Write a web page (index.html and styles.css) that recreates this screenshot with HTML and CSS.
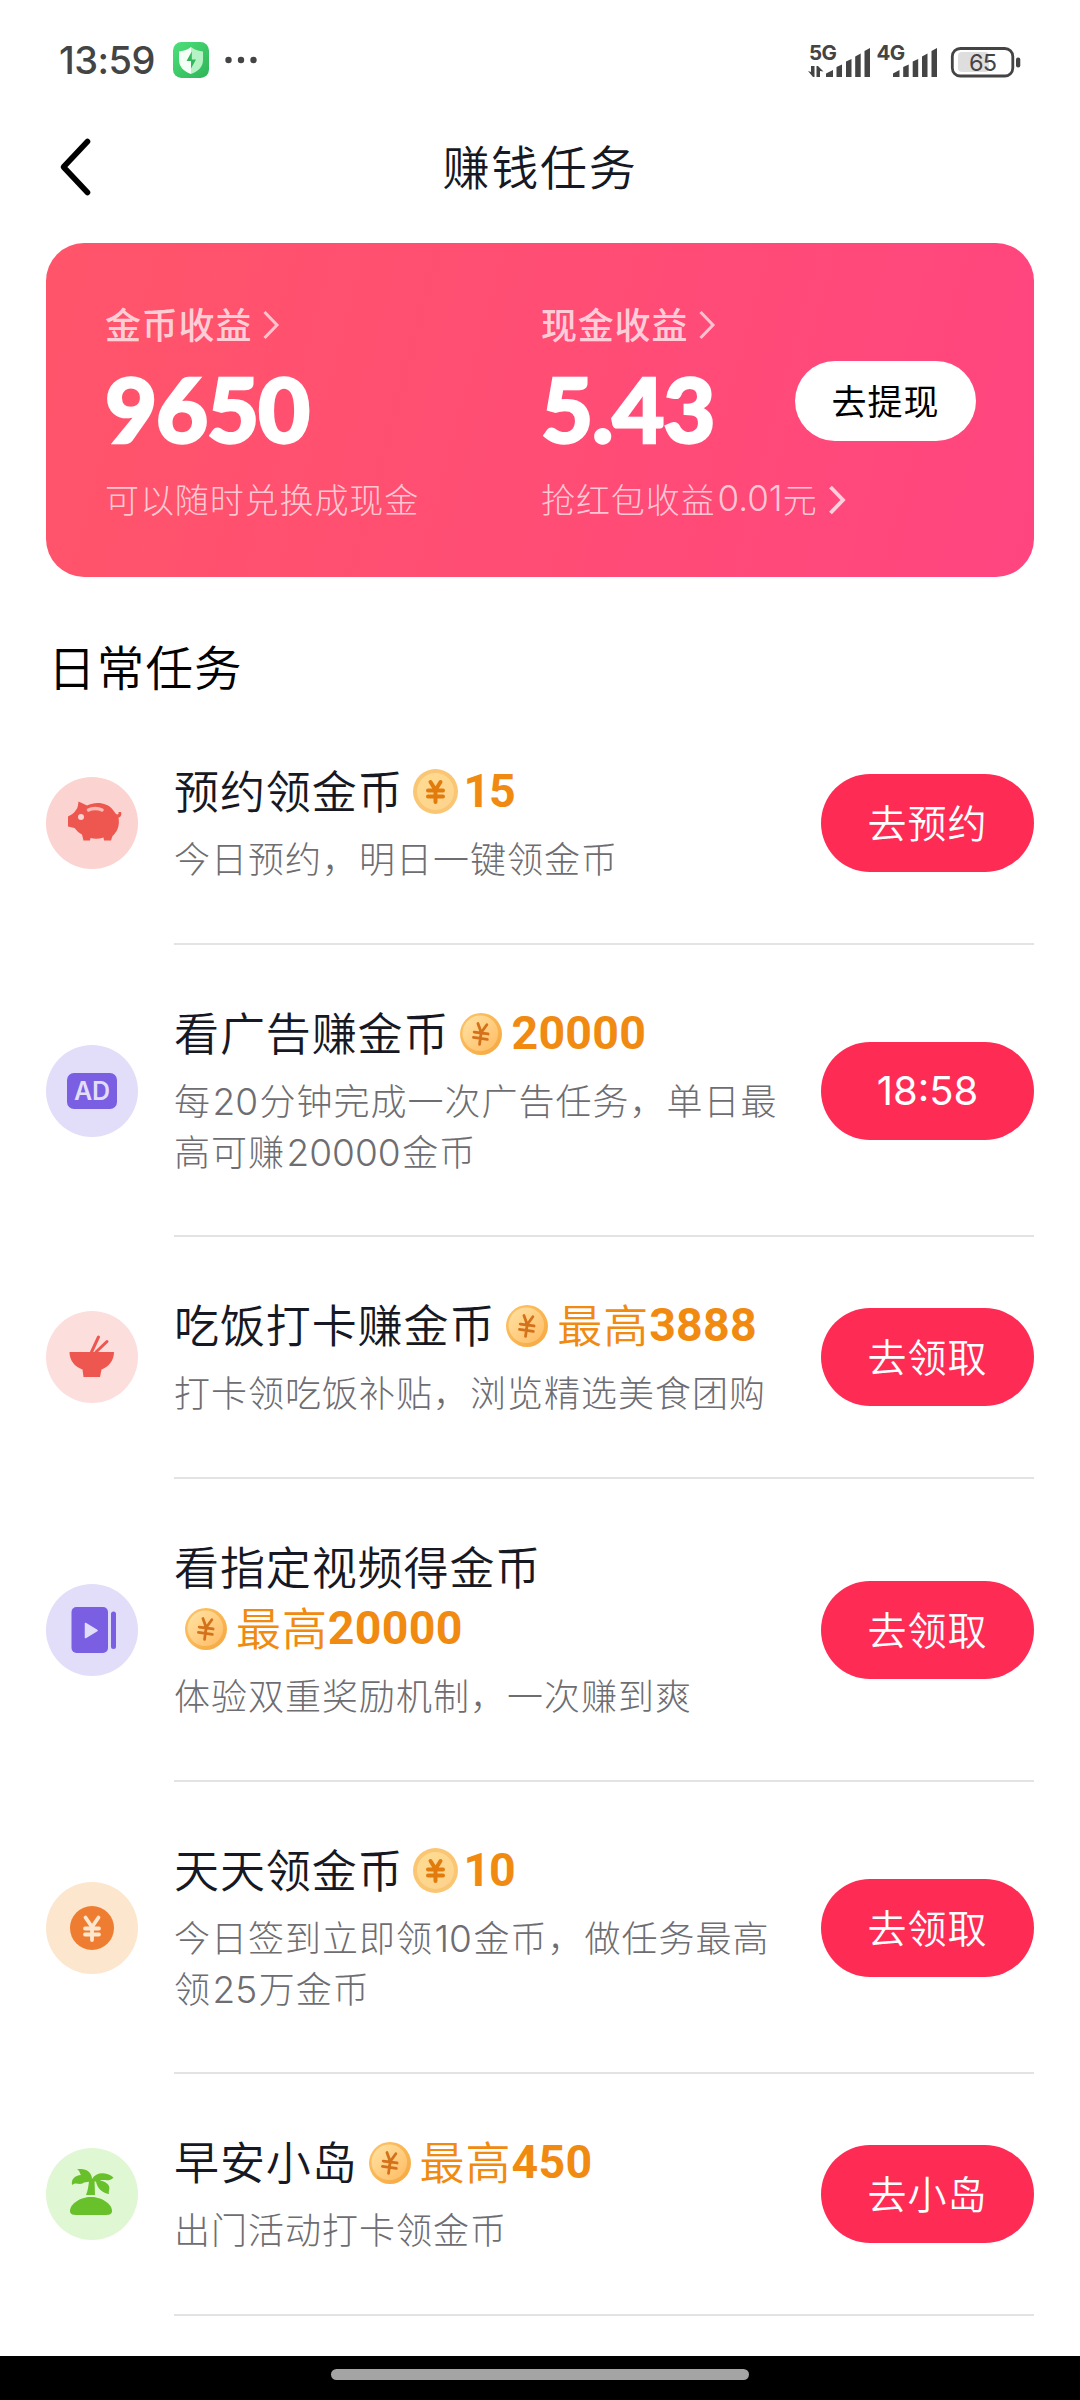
FILE: index.html
```html
<!DOCTYPE html>
<html lang="zh-CN">
<head>
<meta charset="utf-8">
<title>赚钱任务</title>
<link rel="stylesheet" href="styles.css">
</head>
<body>
<svg class="defs" width="0" height="0" aria-hidden="true">
  <defs>
    <linearGradient id="coinRim" x1="0" y1="0" x2="1" y2="1">
      <stop offset="0" stop-color="#fdc468"/><stop offset="1" stop-color="#f6a840"/>
    </linearGradient>
    <linearGradient id="coinFace" x1="0" y1="0" x2="1" y2="1">
      <stop offset="0" stop-color="#ffe3a4"/><stop offset="1" stop-color="#ffbb62"/>
    </linearGradient>
    <linearGradient id="coinSoft" x1="0" y1="0" x2="1" y2="1">
      <stop offset="0" stop-color="#ffdc92"/><stop offset="1" stop-color="#fdd28c"/>
    </linearGradient>
    <linearGradient id="guard" x1="0" y1="0" x2="1" y2="1">
      <stop offset="0" stop-color="#4de07c"/><stop offset="1" stop-color="#2fb457"/>
    </linearGradient>
    <symbol id="coin" viewBox="0 0 42 42">
      <circle cx="21" cy="21" r="21" fill="url(#coinRim)"/>
      <circle cx="20.3" cy="20.3" r="17.8" fill="url(#coinFace)"/>
      <path d="M16.500 11 L21 19.500 L25.500 11 M21 19.500 V31.500 M14 20 H28 M14 25.500 H28" transform="rotate(8 21 21)" class="coin-yen"/>
    </symbol>
    <symbol id="coin-big" viewBox="0 0 45 45">
      <circle cx="22.5" cy="22.5" r="22.5" fill="#fbc673"/>
      <circle cx="22.5" cy="22.5" r="18.500" fill="url(#coinSoft)"/>
      <path d="M17.500 13 L22.500 21 L27.500 13 M22.500 21 V33 M15 21.500 H30 M15 27.500 H30" class="coin-yen coin-yen-bold"/>
    </symbol>
  </defs>
</svg>
<div class="screen">
  <header class="status">
    <span class="clock">13:59</span>
    <svg class="guard" viewBox="0 0 36 36">
      <rect width="36" height="36" rx="8.5" fill="url(#guard)"/>
      <path d="M18 5 C14 8 10 9 6 9.5 V18 C6 25 11 29.500 18 32Z" fill="#f4fff6"/>
      <path d="M18 5 C22 8 26 9 30 9.500 V18 C30 25 25 29.500 18 32Z" fill="#b5f3c4"/>
      <path d="M18.800 9.500 L13.500 19 H18 L18 26.500 L23 17.500 H18.800Z" fill="#32b85a"/>
    </svg>
    <svg class="dots" viewBox="0 0 32 8">
      <circle cx="3.500" cy="4" r="3.200"/><circle cx="16" cy="4" r="3.200"/><circle cx="28.500" cy="4" r="3.200"/>
    </svg>
    <svg class="signals" viewBox="0 0 214 36">
      <text x="1" y="17.500" class="net">5G</text>
      <path d="M0 29 L3 30 V24 H6.500 V35 H5Z M8.500 24 H10 L15.500 29.500 L12 29 V35 H8.500Z"/>
      <path d="M18 35 V31.500 L25 28 V35Z M28.500 35 V25 L34 22.500 V35Z M38 35 V19.500 L43.500 17 V35Z M47.200 35 V14.500 L52.700 11.500 V35Z M56.500 35 V9 L62 6 V35Z"/>
      <text x="68.500" y="17.500" class="net">4G</text>
      <path d="M85 35 V31.500 L91.500 28 V35Z M95.200 35 V25 L100.700 22.500 V35Z M104.700 35 V19.500 L110.200 17 V35Z M114 35 V14.500 L119.500 11.500 V35Z M123.500 35 V9 L129 6 V35Z"/>
      <rect x="150" y="10" width="31" height="20" rx="4" fill="#dedede"/>
      <rect x="144.300" y="6.500" width="60.500" height="27.500" rx="8" class="shell"/>
      <rect x="208" y="15.500" width="4.300" height="10" rx="2"/>
      <text x="174.500" y="29" class="level">65</text>
    </svg>
  </header>

  <nav class="nav">
    <svg class="back" viewBox="0 0 32 58"><path d="M27.500 3.500 L3.500 29 L27.500 54.500"/></svg>
    <h1 class="nav-title">赚钱任务</h1>
  </nav>

  <section class="card">
    <div class="earn earn-coins">
      <div class="earn-label">金币收益<svg class="chev" viewBox="0 0 18 30"><path d="M2.500 2 L15 15 L2.500 28"/></svg></div>
      <div class="earn-value">9650</div>
      <div class="earn-note">可以随时兑换成现金</div>
    </div>
    <div class="earn">
      <div class="earn-label">现金收益<svg class="chev" viewBox="0 0 18 30"><path d="M2.500 2 L15 15 L2.500 28"/></svg></div>
      <div class="earn-value">5.43</div>
      <div class="earn-note">抢红包收益<span class="amount">0.01</span>元<svg class="chev chev-bold" viewBox="0 0 18 30"><path d="M2.500 2 L15 15 L2.500 28"/></svg></div>
    </div>
    <button class="withdraw">去提现</button>
  </section>

  <h2 class="section-title">日常任务</h2>

  <main class="tasks">
    <article class="task">
      <svg class="badge" viewBox="0 0 92 92">
        <circle cx="46" cy="46" r="46" fill="#fbd3d0"/>
        <path d="M32.500 24.500 L41 28.500 C49 24.500 61 25 67 33 L70 37 C72 38 73 37 72.500 35 L75 35 C76 38 74.500 40.500 72.500 40.500 C74 49 71 55 66.500 59 L65 63.500 H58 L57.500 60.500 C53 62 48 62 44.500 61 L44 63.500 H37.500 L36 57.500 C33 56 30.500 53.500 28.500 51 L22 49.500 V39.500 C25 38 28 36.500 30 33 C32 31 32 28 32.500 24.500Z" fill="#ee574f"/>
        <circle cx="35" cy="40" r="3" fill="#fbd3d0"/>
        <path d="M42.500 33 C46 31 52 31 56 33" fill="none" stroke="#fbb9b4" stroke-width="3.500" stroke-linecap="round"/>
      </svg>
      <div class="info">
        <h3 class="name">预约领金币<span class="reward reward-big"><svg class="coin"><use href="#coin-big"/></svg><b>15</b></span></h3>
        <p class="desc">今日预约，明日一键领金币</p>
      </div>
      <button class="go">去预约</button>
    </article>

    <article class="task task-tall">
      <svg class="badge" viewBox="0 0 92 92">
        <circle cx="46" cy="46" r="46" fill="#e2ddf9"/>
        <rect x="21" y="28" width="50" height="36" rx="7" fill="#7a5fe3"/>
        <text x="46" y="55" class="ad">AD</text>
      </svg>
      <div class="info">
        <h3 class="name">看广告赚金币<span class="reward"><svg class="coin"><use href="#coin"/></svg><b>20000</b></span></h3>
        <p class="desc">每<span class="num">20</span>分钟完成一次广告任务，单日最高可赚<span class="num">20000</span>金币</p>
      </div>
      <button class="go go-time">18:58</button>
    </article>

    <article class="task">
      <svg class="badge" viewBox="0 0 92 92">
        <circle cx="46" cy="46" r="46" fill="#fcdedd"/>
        <path d="M23.500 41 H68 C68 49 63 56 55.500 58.500 L54 66 H37.500 L36.500 58.500 C28.500 56 23.500 49 23.500 41Z" fill="#ee574f"/>
        <path d="M45.500 41 L52.500 26 M50 41 L61 30.500" stroke="#ee574f" stroke-width="3" stroke-linecap="round"/>
      </svg>
      <div class="info">
        <h3 class="name">吃饭打卡赚金币<span class="reward"><svg class="coin"><use href="#coin"/></svg>最高<b>3888</b></span></h3>
        <p class="desc">打卡领吃饭补贴，浏览精选美食团购</p>
      </div>
      <button class="go">去领取</button>
    </article>

    <article class="task">
      <svg class="badge" viewBox="0 0 92 92">
        <circle cx="46" cy="46" r="46" fill="#e2ddf9"/>
        <rect x="25.500" y="23" width="36.500" height="46" rx="5" fill="#7a5fe3"/>
        <rect x="65" y="27.500" width="5" height="37.500" rx="2.500" fill="#7a5fe3"/>
        <path d="M39.500 39.500 L51 46.500 L39.500 53.500Z" fill="#e2ddf9" stroke="#e2ddf9" stroke-width="1.500" stroke-linejoin="round"/>
      </svg>
      <div class="info">
        <h3 class="name">看指定视频得金币<span class="reward"><svg class="coin"><use href="#coin"/></svg>最高<b>20000</b></span></h3>
        <p class="desc">体验双重奖励机制，一次赚到爽</p>
      </div>
      <button class="go">去领取</button>
    </article>

    <article class="task task-tall">
      <svg class="badge" viewBox="0 0 92 92">
        <circle cx="46" cy="46" r="46" fill="#fce6cd"/>
        <circle cx="46" cy="46" r="22" fill="#ee7d31"/>
        <path d="M39.500 35.500 L46 45 L52.500 35.500 M46 45 V58 M39 46.500 H53 M39 52.500 H53" class="yen"/>
      </svg>
      <div class="info">
        <h3 class="name">天天领金币<span class="reward reward-big"><svg class="coin"><use href="#coin-big"/></svg><b>10</b></span></h3>
        <p class="desc">今日签到立即领<span class="num">10</span>金币，做任务最高领<span class="num">25</span>万金币</p>
      </div>
      <button class="go">去领取</button>
    </article>

    <article class="task">
      <svg class="badge" viewBox="0 0 92 92">
        <circle cx="46" cy="46" r="46" fill="#e0f7d3"/>
        <g fill="#68c02a">
          <path d="M45 49 C56 49 66 56 66 63 C66 66.500 63 67 59 67 H31 C27 67 24 66.500 24 63 C24 56 34 49 45 49Z"/>
          <path d="M43 33 L48.500 32 L49 47 H40 C42 42 42.500 38 43 33Z"/>
          <path d="M46 31 C46 24 39 19.500 31 21.500 C34 22.500 33.500 25 35 27 C29 27.500 25 31 26 37 C31 33.500 33 38 38 34.500 L44.500 33.500 L50 33.500 C51 40 56 45 63 46 C62 43 65 40 62 36.500 C60 34 57 33 54 32.500 C58 31 63 34.500 67.500 29.500 C60 23.500 50 24 46 31Z"/>
        </g>
      </svg>
      <div class="info">
        <h3 class="name">早安小岛<span class="reward"><svg class="coin"><use href="#coin"/></svg>最高<b>450</b></span></h3>
        <p class="desc">出门活动打卡领金币</p>
      </div>
      <button class="go">去小岛</button>
    </article>
  </main>

  <footer class="gesture"><div class="gesture-bar"></div></footer>
</div>
</body>
</html>
```
FILE: styles.css
```css
* { box-sizing: border-box; margin: 0; padding: 0; }
html, body { width: 1080px; height: 2400px; overflow: hidden; background: #fff; }
body { font-family: "Noto Sans CJK SC", sans-serif; }
button { border: 0; font-family: inherit; }
svg { display: block; flex: none; overflow: visible; }
.defs { position: absolute; }

.screen { display: flex; flex-direction: column; width: 1080px; height: 2400px; }

.status { display: flex; align-items: center; height: 120px; padding: 0 58px 0 59px; }
.clock { width: 114px; font: 500 38px/1 Inter, sans-serif; letter-spacing: -0.5px; color: #444; }
.guard { width: 36px; height: 36px; }
.dots { width: 32px; height: 8px; margin-left: 16px; fill: #444; }
.signals { width: 214px; height: 36px; margin: -1px 0 0 auto; fill: #444; }
.net { font: 700 20.500px Inter, sans-serif; letter-spacing: -0.5px; }
.shell { fill: none; stroke: #444; stroke-width: 2.800px; }
.level { font: 400 23.500px Inter, sans-serif; letter-spacing: -1px; text-anchor: middle; }

.nav { display: grid; grid-template-columns: 58px 1fr 58px; align-items: center; height: 94px; padding: 0 58px; }
.back { width: 32px; height: 58px; margin-left: 2px; }
.back path { fill: none; stroke: #000; stroke-width: 5.600px; stroke-linecap: round; stroke-linejoin: round; }
.nav-title { padding-bottom: 5px; text-align: center; font-size: 47px; line-height: 70px; font-weight: 350; letter-spacing: 1.800px; color: #161823; }

.card { display: flex; align-items: flex-start; height: 334px; margin: 29px 46px 0; padding: 54px 58px 0 59px; border-radius: 38px; background: linear-gradient(105deg, #ff556a 0%, #ff4e73 45%, #ff4580 100%); color: #fff; }
.earn { width: 254px; white-space: nowrap; }
.earn-coins { width: 436px; }
.earn-label { display: flex; align-items: center; height: 52px; font-size: 36px; font-weight: 500; letter-spacing: 0.800px; color: rgba(255,255,255,.74); }
.chev { width: 18px; height: 30px; margin: 3px 0 0 10px; }
.chev path { fill: none; stroke: rgba(255,255,255,.66); stroke-width: 3px; }
.chev-bold path { stroke: rgba(255,255,255,.74); stroke-width: 3.800px; }
.earn-value { height: 124px; font: 900 90px/119px Lato, sans-serif; letter-spacing: -1.200px; -webkit-text-stroke: 2.400px #fff; }
.earn-note { display: flex; align-items: center; height: 50px; font-size: 34px; font-weight: 300; letter-spacing: 0.900px; color: rgba(255,255,255,.7); }
.amount { margin-left: 2px; font-family: Inter, sans-serif; font-size: 35px; font-weight: 300; letter-spacing: 0; }
.withdraw { width: 181px; height: 80px; margin: 64px 0 0 auto; padding-bottom: 4px; border-radius: 40px; background: #fff; font-size: 35px; font-weight: 400; letter-spacing: 1px; color: #000; }

.section-title { height: 127px; padding: 54px 0 0 48px; font-size: 47.500px; line-height: 70px; font-weight: 350; letter-spacing: 1.200px; color: #000; }

.tasks { flex: 1; padding: 0 46px; }
.task { display: flex; align-items: center; padding: 57px 0 60px; border-bottom: 1px solid transparent; background: linear-gradient(#e3e3e5, #e3e3e5) 128px 100% / 861px 2px no-repeat; }
.task-tall { padding-bottom: 59px; }
.badge { width: 92px; height: 92px; margin-right: 36px; }
.info { width: 611px; margin: -2px 0 2px; }
.name { font-size: 45px; line-height: 61px; font-weight: 350; letter-spacing: 0.900px; color: #161823; }
.reward { display: inline-flex; align-items: center; height: 61px; vertical-align: top; margin-left: 11px; color: #f08a10; }
.reward-big { margin-left: 9px; }
.coin { width: 42px; height: 42px; margin: 4px 9px 0 0; }
.reward-big .coin { width: 45px; height: 45px; margin-right: 6px; }
.reward b { padding-top: 4px; font: 700 46.500px/61px Roboto, sans-serif; letter-spacing: 0.300px; }
.reward-big b { letter-spacing: -1.200px; }
.coin-yen { fill: none; stroke: #d4711b; stroke-width: 2.800px; stroke-linecap: round; }
.coin-yen-bold { stroke: #e27b0d; stroke-width: 4px; }
.desc { margin-top: 12px; font-size: 36px; line-height: 51px; font-weight: 300; letter-spacing: 1px; color: #6d6d72; }
.num { font-family: Inter, sans-serif; font-size: 37px; font-weight: 300; letter-spacing: 0; margin: 0 1.500px; line-height: 1; }
.ad { font: 600 25px Inter, sans-serif; text-anchor: middle; fill: #e2ddf9; }
.yen { fill: none; stroke: #fce6cd; stroke-width: 3.800px; stroke-linecap: round; }
.go { width: 213px; height: 98px; margin-left: auto; padding-bottom: 4px; border-radius: 49px; background: #fe2c55; font-size: 39px; font-weight: 350; letter-spacing: 1px; color: #fff; }
.go-time { padding-bottom: 0; font-family: Inter, sans-serif; font-size: 40px; font-weight: 400; letter-spacing: 0; }

.gesture { display: flex; justify-content: center; height: 44px; padding-top: 13px; background: #000; }
.gesture-bar { width: 418px; height: 11px; border-radius: 6px; background: #a4a4a4; }
```
